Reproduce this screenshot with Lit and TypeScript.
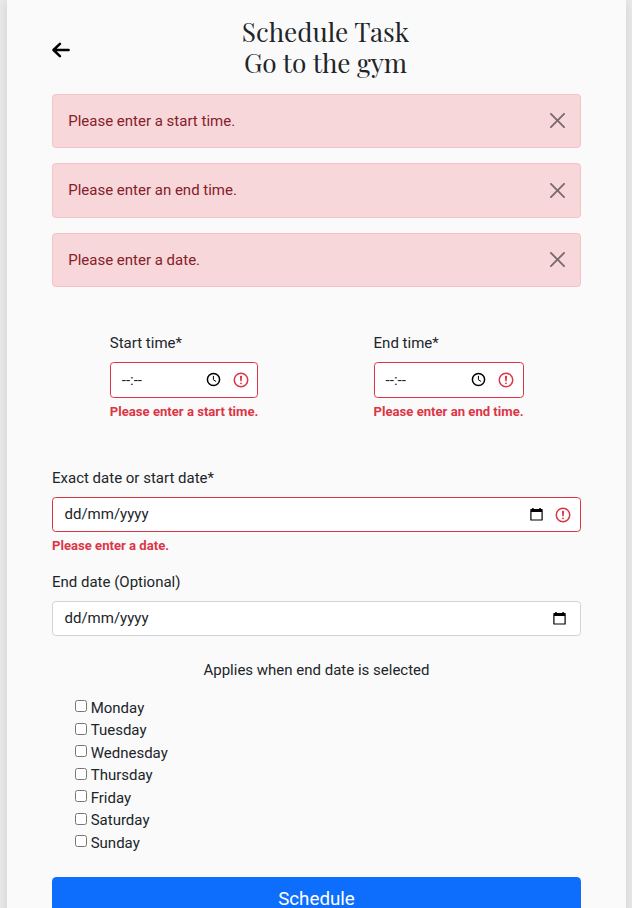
import { LitElement, html, css } from "lit";
import { customElement } from "lit/decorators.js";

const arrow = html`<svg class="arrow" viewBox="0 0 18 18" fill="none" stroke="#000" stroke-width="2.500" stroke-linecap="round" stroke-linejoin="round"><path d="M1.600 9H16.600M7.900 2.900L1.500 9l6.400 6.200"/></svg>`;

const cross = html`<svg class="cross" viewBox="0 0 16 16"><path d="M.293.293a1 1 0 0 1 1.414 0L8 6.586 14.293.293a1 1 0 1 1 1.414 1.414L9.414 8l6.293 6.293a1 1 0 0 1-1.414 1.414L8 9.414l-6.293 6.293a1 1 0 0 1-1.414-1.414L6.586 8 .293 1.707a1 1 0 0 1 0-1.414z"/></svg>`;

const clock = html`<svg class="picker clock" viewBox="0 0 15 15" fill="none" stroke="#000"><circle cx="7.500" cy="7.500" r="6.100" stroke-width="1.500"/><path d="M7.400 3.900v3.900l2.700 1.700" stroke-width="1"/></svg>`;

const calendar = html`<svg class="picker" viewBox="0 0 15 15"><path d="M2 2h1.200V.9h1.500V2h5.600V.9h1.500V2H13q.7 0 .7.700v10.200q0 .7-.7.700H2q-.7 0-.7-.7V2.700Q1.300 2 2 2zm.5 3.100v7.400h10V5.100z" fill-rule="evenodd"/></svg>`;

const warn = html`<svg class="warn" viewBox="0 0 12 12" fill="none" stroke="#dc3545"><circle cx="6" cy="6" r="4.500"/><path d="M5.800 3.600h.4L6 6.500z" stroke-linejoin="round"/><circle cx="6" cy="8.200" r=".6" fill="#dc3545" stroke="none"/></svg>`;

const days = ["Monday", "Tuesday", "Wednesday", "Thursday", "Friday", "Saturday", "Sunday"];

@customElement("app-root")
export class AppRoot extends LitElement {
  static styles = css`
    :host { display: block; height: 908px; overflow: hidden; background: #ebebeb; color: #212529;
      font: 15px/22.5px Roboto, sans-serif; }
    * { box-sizing: border-box; }
    .card { margin: 0 6px 0 7px; height: 930px; padding: 16px 45px 0; background: #fafafa;
      box-shadow: 0 0 12px rgba(0, 0, 0, .12); }
    .head { display: grid; grid-template-columns: 18px 1fr; height: 77.600px; }
    .arrow { width: 18px; height: 18px; margin-top: 25px; display: block; }
    h1 { margin: 0; font: 400 26.200px/31px "Playfair Display", "Liberation Serif", serif; text-align: center; }
    .line { display: block; }
    .alert { display: flex; justify-content: space-between; align-items: center; height: 54.500px;
      margin-bottom: 15px; padding: 0 15px; border: 1px solid #f5c2c7; border-radius: 3.750px;
      background: #f8d7da; color: #842029; }
    .alert span { margin-left: .2px; }
    .cross { width: 15px; height: 15px; opacity: .5; display: block; }
    .times { display: grid; grid-template-columns: 1fr 1fr; justify-items: center; margin: 44.900px .2px 0 -.2px; height: 134.700px; }
    .label { margin-bottom: 7.500px; }
    .input { display: flex; align-items: center; height: 35.750px; padding: 0 11.500px; background: #fff;
      border: 1px solid #ced4da; border-radius: 3.750px; }
    .invalid { border-color: #dc3545; padding-right: 7.600px; }
    .value { flex: 1; }
    .times .value { margin-left: -.5px; }
    .picker { width: 15px; height: 15px; display: block; margin-right: 2px; }
    .clock { margin-right: 2.500px; }
    .warn { width: 18px; height: 18px; display: block; margin-left: 8.300px; }
    .feedback { margin-top: 3.750px; font-size: 13.125px; line-height: 19.700px; font-weight: 700; color: #dc3545; white-space: nowrap; }
    .times .feedback { margin-top: 4.300px; }
    .exact { margin-bottom: 14.800px; }
    .note { text-align: center; margin: 22.700px 0 15px; }
    .day { display: flex; height: 22.500px; }
    .days { padding-left: 22.500px; }
    .day input { width: 12px; height: 12px; margin: 3.400px 4px 0 .2px; }
    .button { display: block; width: 100%; height: 44px; margin-top: 22.800px; border: 0; border-radius: 4.500px;
      background: #0d6efd; color: #fff; font: 18.750px/28px Roboto, sans-serif; }
  `;

  private alert(text: string) {
    return html`<div class="alert"><span>${text}</span>${cross}</div>`;
  }

  private field(label: string, value: string, icon: unknown, error = "") {
    return html`<div>
      <div class="label">${label}</div>
      <div class="input ${error ? "invalid" : ""}"><span class="value">${value}</span>${icon}${error ? warn : ""}</div>
      ${error ? html`<div class="feedback">${error}</div>` : ""}
    </div>`;
  }

  render() {
    return html`<main class="card">
      <header class="head">${arrow}<h1><span class="line">Schedule Task</span><span class="line">Go to the gym</span></h1></header>
      ${this.alert("Please enter a start time.")}
      ${this.alert("Please enter an end time.")}
      ${this.alert("Please enter a date.")}
      <div class="times">
        ${this.field("Start time*", "--:--", clock, "Please enter a start time.")}
        ${this.field("End time*", "--:--", clock, "Please enter an end time.")}
      </div>
      <div class="exact">${this.field("Exact date or start date*", "dd/mm/yyyy", calendar, "Please enter a date.")}</div>
      ${this.field("End date (Optional)", "dd/mm/yyyy", calendar)}
      <div class="note">Applies when end date is selected</div>
      <div class="days">${days.map((d) => html`<label class="day"><input type="checkbox" /><span>${d}</span></label>`)}</div>
      <button class="button">Schedule</button>
    </main>`;
  }
}
